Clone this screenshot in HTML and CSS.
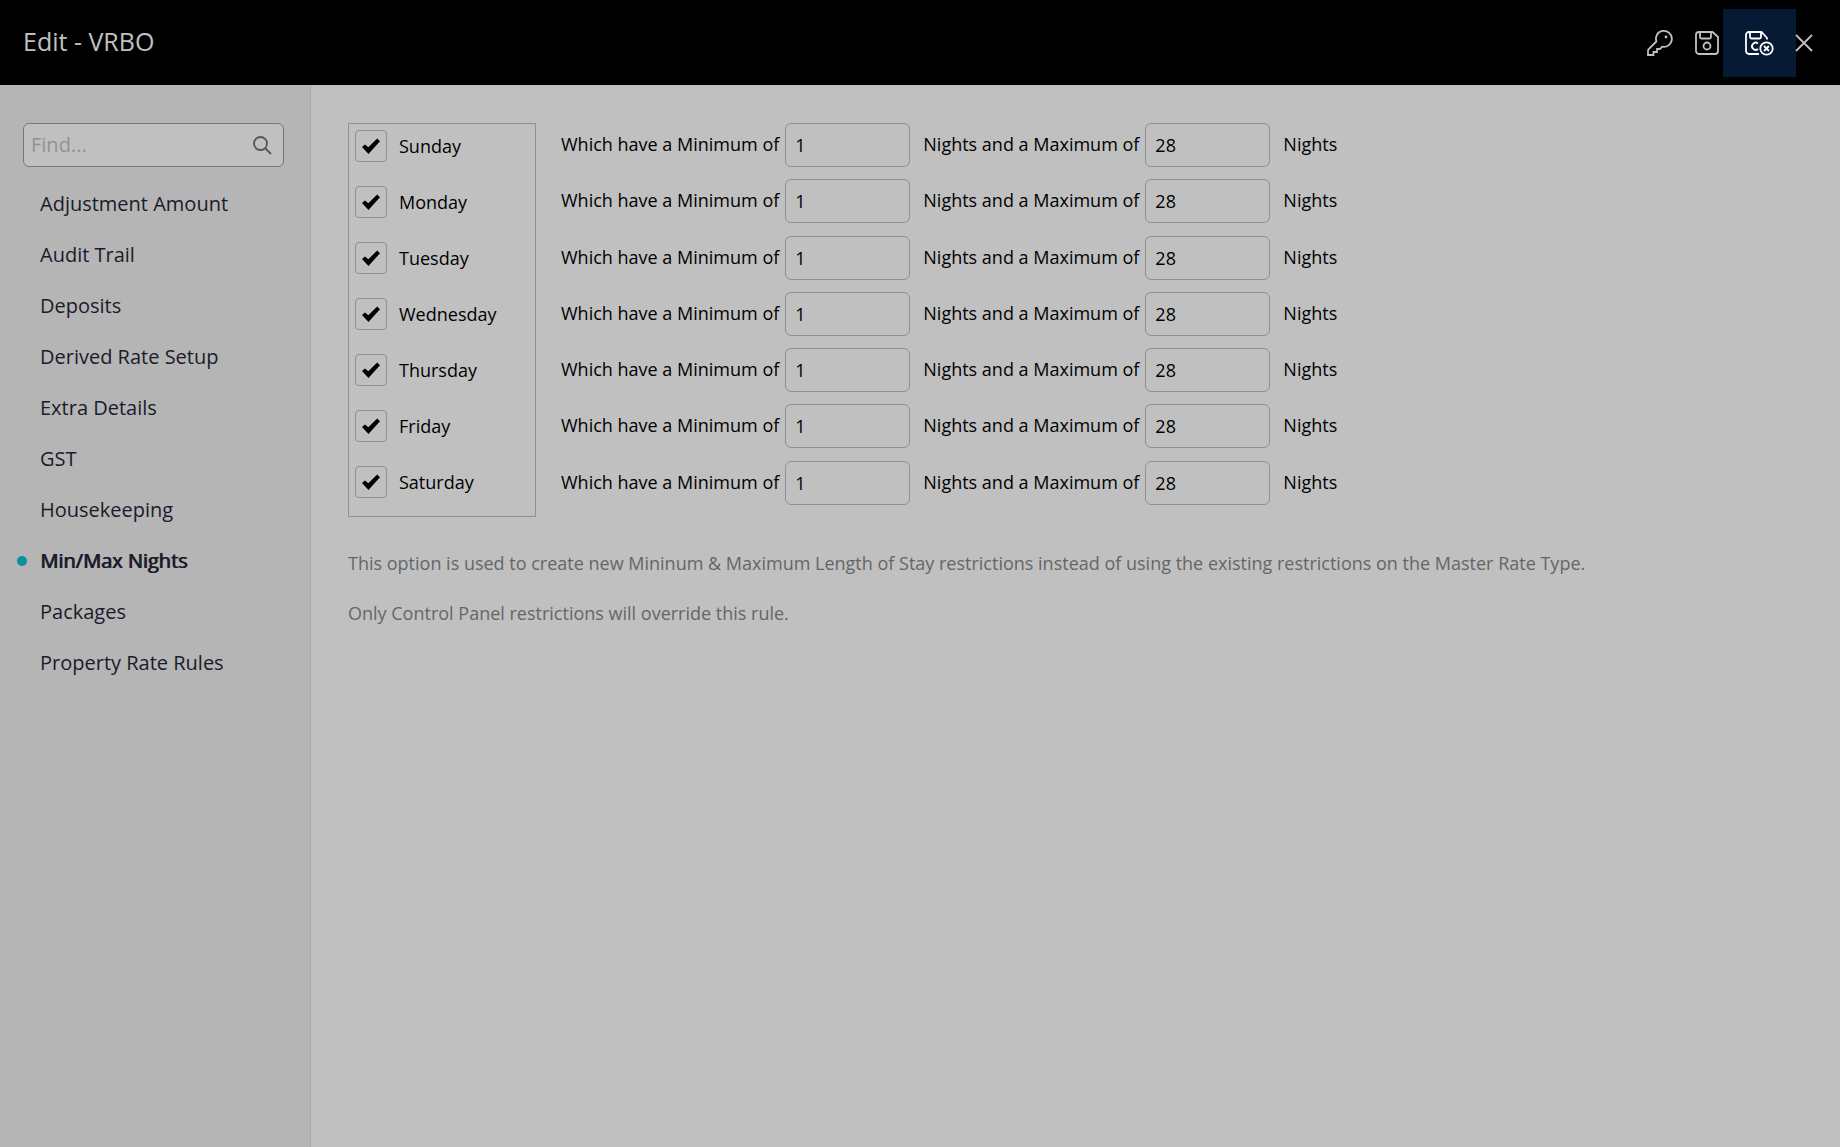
FILE: index.html
```
<!DOCTYPE html>
<html lang="en">
<head>
    <meta charset="UTF-8">
    <meta name="viewport" content="width=device-width, initial-scale=1.0">
    <title>Edit - VRBO</title>
    <link rel="stylesheet" href="styles.css">
</head>
<body>
    <header class="topbar">
        <h1>Edit - VRBO</h1>
        <div class="actions">
            <button class="icon-btn" aria-label="Security">
                <svg width="26" height="26" viewBox="0 0 26 26">
                    <path d="M10.300 11.500 2.500 19.300Q2 20 2 21v4h5.500v-3h3.500v-3h3l2.200-2.300A8 8 0 1 0 10.300 11.500z"/>
                    <circle class="dot" cx="20" cy="7" r="1.400"/>
                </svg>
            </button>
            <button class="icon-btn" aria-label="Save">
                <svg width="24" height="24" viewBox="0 0 24 24">
                    <path d="M4 1h13.500L23 6v14a3 3 0 0 1-3 3H4a3 3 0 0 1-3-3V4a3 3 0 0 1 3-3z"/>
                    <path d="M5 1v5a1.500 1.500 0 0 0 1.500 1.500h8A1.500 1.500 0 0 0 16 6V1"/>
                    <circle cx="12" cy="15" r="3.500"/>
                </svg>
            </button>
            <button class="icon-btn active" aria-label="Save and exit">
                <svg width="30" height="26" viewBox="0 0 30 26">
                    <path d="M14 24H4a3 3 0 0 1-3-3V5a3 3 0 0 1 3-3h12.500l5.500 6v1.500"/>
                    <path d="M5 2v5a1.500 1.500 0 0 0 1.500 1.500h8A1.500 1.500 0 0 0 16 7V2"/>
                    <path d="M13 13.500a3.600 3.600 0 1 0 0 5.500"/>
                    <circle cx="21.500" cy="18.500" r="6.200"/>
                    <path d="m19 16 5 5m0-5-5 5"/>
                </svg>
            </button>
            <button class="icon-btn close" aria-label="Close">
                <svg width="16" height="16" viewBox="0 0 16 16">
                    <path d="m0 0 16 16M16 0 0 16"/>
                </svg>
            </button>
        </div>
    </header>

    <div class="layout">
        <aside class="sidebar">
            <div class="search">
                <input type="text" id="find" placeholder="Find..." aria-label="Find">
                <svg width="18" height="18" viewBox="0 0 18 18">
                    <circle cx="7.500" cy="7.500" r="6.500"/>
                    <path d="m12 12 6 6"/>
                </svg>
            </div>
            <nav>
                <a href="#">Adjustment Amount</a>
                <a href="#">Audit Trail</a>
                <a href="#">Deposits</a>
                <a href="#">Derived Rate Setup</a>
                <a href="#">Extra Details</a>
                <a href="#">GST</a>
                <a href="#">Housekeeping</a>
                <a href="#" class="selected">Min/Max Nights</a>
                <a href="#">Packages</a>
                <a href="#">Property Rate Rules</a>
            </nav>
        </aside>

        <main class="content">
            <div class="rules">
                <div class="days">
                    <label><input type="checkbox" checked>Sunday</label>
                    <label><input type="checkbox" checked>Monday</label>
                    <label><input type="checkbox" checked>Tuesday</label>
                    <label><input type="checkbox" checked>Wednesday</label>
                    <label><input type="checkbox" checked>Thursday</label>
                    <label><input type="checkbox" checked>Friday</label>
                    <label><input type="checkbox" checked>Saturday</label>
                </div>
                <div class="limits">
                    <div class="limit">
                        <label for="min-sun">Which have a Minimum of</label>
                        <input type="text" id="min-sun" value="1">
                        <label for="max-sun">Nights and a Maximum of</label>
                        <input type="text" id="max-sun" value="28">
                        <span>Nights</span>
                    </div>
                    <div class="limit">
                        <label for="min-mon">Which have a Minimum of</label>
                        <input type="text" id="min-mon" value="1">
                        <label for="max-mon">Nights and a Maximum of</label>
                        <input type="text" id="max-mon" value="28">
                        <span>Nights</span>
                    </div>
                    <div class="limit">
                        <label for="min-tue">Which have a Minimum of</label>
                        <input type="text" id="min-tue" value="1">
                        <label for="max-tue">Nights and a Maximum of</label>
                        <input type="text" id="max-tue" value="28">
                        <span>Nights</span>
                    </div>
                    <div class="limit">
                        <label for="min-wed">Which have a Minimum of</label>
                        <input type="text" id="min-wed" value="1">
                        <label for="max-wed">Nights and a Maximum of</label>
                        <input type="text" id="max-wed" value="28">
                        <span>Nights</span>
                    </div>
                    <div class="limit">
                        <label for="min-thu">Which have a Minimum of</label>
                        <input type="text" id="min-thu" value="1">
                        <label for="max-thu">Nights and a Maximum of</label>
                        <input type="text" id="max-thu" value="28">
                        <span>Nights</span>
                    </div>
                    <div class="limit">
                        <label for="min-fri">Which have a Minimum of</label>
                        <input type="text" id="min-fri" value="1">
                        <label for="max-fri">Nights and a Maximum of</label>
                        <input type="text" id="max-fri" value="28">
                        <span>Nights</span>
                    </div>
                    <div class="limit">
                        <label for="min-sat">Which have a Minimum of</label>
                        <input type="text" id="min-sat" value="1">
                        <label for="max-sat">Nights and a Maximum of</label>
                        <input type="text" id="max-sat" value="28">
                        <span>Nights</span>
                    </div>
                </div>
            </div>
            <p class="note">This option is used to create new Mininum &amp; Maximum Length of Stay restrictions instead of using the existing restrictions on the Master Rate Type.</p>
            <p class="note">Only Control Panel restrictions will override this rule.</p>
        </main>
    </div>
</body>
</html>
```

FILE: styles.css
```
* {
    box-sizing: border-box;
}

body {
    margin: 0;
    min-height: 100vh;
    display: flex;
    flex-direction: column;
    background-color: #c0c0c0;
    color: #000;
    font-family: "Open Sans", sans-serif;
    font-size: 18px;
    line-height: 24px;
}

input {
    font: inherit;
    color: inherit;
}

svg {
    flex: none;
    fill: none;
    stroke: currentColor;
    stroke-width: 1.8;
    overflow: visible;
}

/* Header */
.topbar {
    display: flex;
    align-items: center;
    justify-content: space-between;
    height: 85px;
    padding: 0 28px 0 23px;
    background-color: #000;
    color: #c0c0c0;
}

.topbar h1 {
    margin: 0;
    padding-bottom: 3px;
    font-size: 25px;
    font-weight: 400;
}

.actions {
    display: flex;
    align-items: center;
}

.icon-btn {
    display: flex;
    align-items: center;
    justify-content: center;
    width: 48px;
    height: 68px;
    padding: 0;
    border: none;
    background: none;
    color: inherit;
    cursor: pointer;
}

.icon-btn .dot {
    fill: currentColor;
    stroke: none;
}

.icon-btn.active {
    width: 73px;
    margin-left: -8px;
    background-color: #061b33;
    color: #fff;
}

.icon-btn.close {
    width: 16px;
}

/* Sidebar */
.layout {
    display: flex;
    flex: 1;
}

.sidebar {
    flex: none;
    width: 311px;
    padding: 38px 26px 0 23px;
    border-right: 1px solid #a9a9a9;
    background-color: #b5b5b5;
    color: #1b1b2b;
    font-size: 20px;
}

.search {
    display: flex;
    align-items: center;
    height: 44px;
    padding: 0 12px 0 7px;
    border: 1px solid #777;
    border-radius: 6px;
    background-color: #c0c0c0;
    color: #555;
}

.search input {
    flex: 1;
    min-width: 0;
    padding: 0;
    border: none;
    background: none;
}

.search input::placeholder {
    color: #929292;
}

nav {
    padding-top: 11px;
}

nav a {
    display: flex;
    align-items: center;
    height: 51px;
    padding-left: 17px;
    color: inherit;
    text-decoration: none;
}

nav a.selected {
    text-shadow: 1px 0 0 currentColor;
}

nav a.selected::before {
    content: "";
    width: 10px;
    height: 10px;
    margin-left: -23px;
    margin-right: 13px;
    border-radius: 50%;
    background-color: #09919b;
}

/* Nights per day */
.content {
    flex: 1;
    padding: 38px 37px;
}

.rules {
    display: flex;
    gap: 25px;
    margin-bottom: 34px;
}

.days {
    display: grid;
    width: 188px;
    height: 394px;
    padding: 0 6px;
    border: 1px solid #909090;
}

.days label {
    display: flex;
    gap: 12px;
    padding-top: 6px;
    line-height: 32px;
}

.days input {
    appearance: none;
    display: grid;
    place-items: center;
    width: 32px;
    height: 32px;
    margin: 0;
    border: 1px solid #909090;
    border-radius: 4px;
}

.days input:checked::before {
    content: "";
    width: 18px;
    height: 16px;
    background-color: #000;
    clip-path: polygon(0 56%, 17% 40%, 35% 58%, 84% 3%, 100% 20%, 36% 100%);
}

.limits {
    display: grid;
    height: 394px;
}

.limit {
    display: flex;
    align-items: flex-start;
    line-height: 43px;
}

.limit input {
    width: 125px;
    height: 44px;
    margin: 0 13px 0 6px;
    padding: 0 9px;
    border: 1px solid #909090;
    border-radius: 6px;
    background: none;
}

.note {
    margin: 0 0 26px;
    color: #666;
}
```
